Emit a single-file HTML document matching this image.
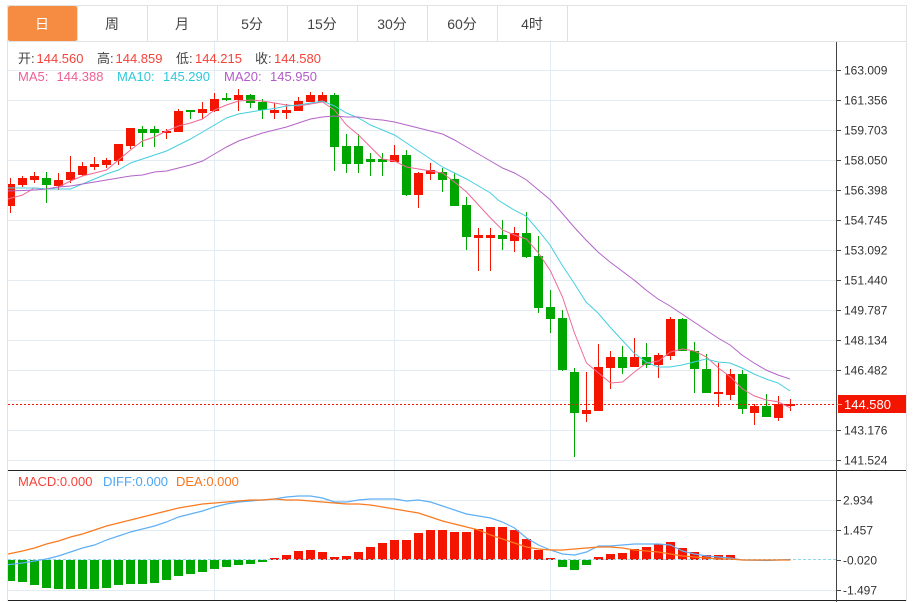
<!DOCTYPE html>
<html lang="zh"><head><meta charset="utf-8"><title>K线图</title>
<style>
html,body{margin:0;padding:0;background:#fff;width:913px;height:602px;overflow:hidden}
svg{display:block;position:absolute;left:0;top:0}
text{font-family:"Liberation Sans","Noto Sans CJK SC",sans-serif}
</style></head><body>
<svg width="913" height="602" viewBox="0 0 913 602" xmlns="http://www.w3.org/2000/svg">
<rect width="913" height="602" fill="#fff"/>
<!-- frame and tabs -->
<path d="M7 5.5H906.5V601M7.5 5V601M7 41.5H906.5" fill="none" stroke="#e2e2e2"/>
<path d="M77.5 6V41M147.5 6V41M217.5 6V41M287.5 6V41M357.5 6V41M427.5 6V41M497.5 6V41M567.5 6V41" stroke="#e0e0e0"/>
<rect x="8" y="6" width="69" height="35" rx="2" fill="#f68c42"/>
<g font-size="14" text-anchor="middle" fill="#444">
<text x="42" y="29" fill="#fff">日</text><text x="112" y="29">周</text><text x="182" y="29">月</text><text x="252" y="29">5分</text><text x="322" y="29">15分</text><text x="392" y="29">30分</text><text x="462" y="29">60分</text><text x="532" y="29">4时</text>
</g>
<!-- grid -->
<path d="M8 70.5H836M8 100.5H836M8 130.5H836M8 160.5H836M8 190.5H836M8 220.5H836M8 250.5H836M8 280.5H836M8 310.5H836M8 340.5H836M8 370.5H836M8 400.5H836M8 430.5H836M8 460.5H836M8 500.5H836M8 530.5H836M8 590.5H836M214.5 42V600M394.5 42V600M550.5 42V600" stroke="#e3ecf2" fill="none"/>
<path d="M8 470.5H906M8 600.5H906" stroke="#222"/>
<path d="M836.5 42V602" stroke="#444"/>
<path d="M836 70.5h5M836 100.5h5M836 130.5h5M836 160.5h5M836 190.5h5M836 220.5h5M836 250.5h5M836 280.5h5M836 310.5h5M836 340.5h5M836 370.5h5M836 430.5h5M836 460.5h5M836 500.5h5M836 530.5h5M836 560.5h5M836 590.5h5" stroke="#444"/>
<g font-size="12" fill="#333">
<text x="844" y="74.5">163.009</text><text x="844" y="104.5">161.356</text><text x="844" y="134.5">159.703</text><text x="844" y="164.5">158.050</text><text x="844" y="194.5">156.398</text><text x="844" y="224.5">154.745</text><text x="844" y="254.5">153.092</text><text x="844" y="284.5">151.440</text><text x="844" y="314.5">149.787</text><text x="844" y="344.5">148.134</text><text x="844" y="374.5">146.482</text><text x="844" y="434.5">143.176</text><text x="844" y="464.5">141.524</text>
<text x="843" y="504.5">2.934</text><text x="843" y="534.5">1.457</text><text x="843" y="564.5">-0.020</text><text x="843" y="594.5">-1.497</text>
</g>
<!-- wicks -->
<path stroke="#f41500" fill="none" d="M10.5 178V213M22.5 176V187M34.5 172V183M58.5 173V190M70.5 156V183M82.5 162V176M94.5 157V170M106.5 158V168M118.5 144V165M130.5 128V149M166.5 129V139M178.5 109V132M202.5 102V119M214.5 93V112M238.5 89V111M274.5 103V119M286.5 104V119M298.5 97V111M310.5 92V102M322.5 92V102M394.5 145V162M418.5 172V208M430.5 163V180M478.5 228V271M490.5 228V271M514.5 227V252M586.5 372V422M598.5 344V411M610.5 351V389M634.5 338V367M658.5 353V378M670.5 317V360M718.5 363V407M730.5 369V400M754.5 404V425M778.5 396V421M790.5 399V411"/>
<path stroke="#00a600" fill="none" d="M46.5 172V203M142.5 126V147M154.5 126V147M190.5 110V119M226.5 93V101M250.5 94V108M262.5 99V119M334.5 93V171M346.5 134V173M358.5 134V173M370.5 153V176M382.5 153V176M406.5 150V196M442.5 168V192M454.5 173V206M466.5 197V250M502.5 220V250M526.5 212V258M538.5 236V313M550.5 290V333M562.5 310V371M574.5 368V457M622.5 346V374M646.5 343V368M682.5 318V351M694.5 342V393M706.5 354V393M742.5 370V414M766.5 394V417"/>
<!-- candle bodies -->
<path fill="#f41500" d="M8 184h7v22h-7zM18 178h9v7h-9zM30 176h9v4h-9zM54 180h9v6h-9zM66 172h9v8h-9zM78 166h9v9h-9zM90 164h9v3h-9zM102 160h9v5h-9zM114 144h9v17h-9zM126 128h9v18h-9zM162 131h9v2h-9zM174 111h9v21h-9zM198 109h9v4h-9zM210 99h9v12h-9zM234 95h9v5h-9zM270 110h9v3h-9zM282 110h9v3h-9zM294 101h9v10h-9zM306 95h9v7h-9zM318 95h9v7h-9zM390 155h9v7h-9zM414 173h9v22h-9zM426 170h9v4h-9zM474 235h9v3h-9zM486 235h9v3h-9zM510 233h9v8h-9zM582 410h9v4h-9zM594 367h9v44h-9zM606 357h9v11h-9zM630 357h9v10h-9zM654 355h9v10h-9zM666 319h9v37h-9zM714 392h9v2h-9zM726 374h9v21h-9zM750 406h9v7h-9zM774 404h9v14h-9zM786 404h9v2h-9z"/>
<path fill="#00a600" d="M42 178h9v7h-9zM138 129h9v4h-9zM150 129h9v4h-9zM186 110h9v2h-9zM222 98h9v2h-9zM246 95h9v8h-9zM258 102h9v8h-9zM330 95h9v52h-9zM342 146h9v18h-9zM354 146h9v18h-9zM366 159h9v3h-9zM378 159h9v3h-9zM402 155h9v40h-9zM438 172h9v8h-9zM450 179h9v27h-9zM462 205h9v32h-9zM498 235h9v4h-9zM522 233h9v24h-9zM534 256h9v52h-9zM546 307h9v12h-9zM558 318h9v52h-9zM570 372h9v41h-9zM618 357h9v11h-9zM642 357h9v8h-9zM678 319h9v32h-9zM690 351h9v18h-9zM702 369h9v24h-9zM738 374h9v35h-9zM762 406h9v11h-9z"/>
<!-- MA lines -->
<polyline fill="none" stroke="#ef6a96" stroke-width="1" points="8,199 22.5,195 34.5,188 46.5,189 58.5,187 70.5,181 82.5,176 94.5,173 106.5,170 118.5,160 130.5,150 142.5,141 154.5,137 166.5,131 178.5,126 190.5,123 202.5,119 214.5,110 226.5,105 238.5,101 250.5,100 262.5,101 274.5,103 286.5,105 298.5,106 310.5,104 322.5,102 334.5,110 346.5,125 358.5,135 370.5,147 382.5,159 394.5,161 406.5,167 418.5,169 430.5,171 442.5,173 454.5,182 466.5,192 478.5,205 490.5,218 502.5,230 514.5,235 526.5,239 538.5,253 550.5,271 562.5,297 574.5,333 586.5,363 598.5,373 610.5,383 622.5,382 634.5,372 646.5,363 658.5,361 670.5,352 682.5,349 694.5,351 706.5,357 718.5,368 730.5,377 742.5,389 754.5,396 766.5,400 778.5,402 790.5,408"/>
<polyline fill="none" stroke="#45cfe0" stroke-width="1" points="8,188 22.5,188 34.5,188 46.5,189 58.5,189 70.5,189 82.5,184 94.5,179 106.5,174 118.5,170 130.5,163 142.5,159 154.5,155 166.5,151 178.5,145 190.5,139 202.5,132 214.5,125 226.5,118 238.5,114 250.5,112 262.5,110 274.5,108.5 286.5,106 298.5,105 310.5,103 322.5,101 334.5,106 346.5,113 358.5,118 370.5,125 382.5,130 394.5,135 406.5,143 418.5,151 430.5,159 442.5,167 454.5,173 466.5,179 478.5,186 490.5,193 498,200 514,210 526,216 538,230 550,245 562,265 574,283 586,302 598,313 610,327 622,340 634,353 646,362 658,367 670,367 682,365 694,362 706,359 718,362 730,363 742,368 754,374 766,379 778,383 790,391"/>
<polyline fill="none" stroke="#b464c8" stroke-width="1" points="8,191 22.5,190.5 34.5,190 46.5,189 58.5,187 70.5,186 82.5,184 94.5,182 106.5,180 118.5,178 130.5,176 142.5,175 154.5,172 166.5,171 178.5,168 190.5,165 202.5,161 214.5,154 226.5,147 238.5,141 250.5,137 262.5,133 274.5,130 286.5,127 298.5,123 310.5,119 322.5,117 334.5,116 346.5,117 358.5,117 370.5,119 382.5,120 394.5,122 406.5,125 418.5,128 430.5,131 442.5,134 454.5,140 466.5,147 478.5,154 490.5,161 502.5,168 514.5,173 526.5,180 538.5,190 550.5,200 562,213 574,227 586,240 598,252 610,262 622,271 634,280 646,290 658,299 670,306 682,314 694,322 706,330 718,338 730,345 742,355 754,363 766,370 778,375 790,379"/>
<!-- price line -->
<path d="M8 404.5H836" stroke="#f41500" stroke-dasharray="2 2"/>
<rect x="838" y="395" width="68" height="18" fill="#f41500"/>
<path d="M837 404.5h5" stroke="#f9a090"/>
<text x="844" y="409" font-size="13" fill="#fff">144.580</text>
<!-- legends -->
<g font-size="13">
<g fill="#444"><text x="18" y="63">开:</text><text x="97" y="63">高:</text><text x="176" y="63">低:</text><text x="255" y="63">收:</text></g>
<g fill="#f4433a"><text x="36.5" y="63">144.560</text><text x="115.5" y="63">144.859</text><text x="195" y="63">144.215</text><text x="274" y="63">144.580</text></g>
<g fill="#ef5f94"><text x="18" y="81">MA5:</text><text x="56.5" y="81">144.388</text></g>
<g fill="#2fc8dc"><text x="117" y="81">MA10:</text><text x="163" y="81">145.290</text></g>
<g fill="#b25cc8"><text x="224" y="81">MA20:</text><text x="270" y="81">145.950</text></g>
<text x="18" y="486" fill="#f4433a">MACD:0.000</text>
<text x="103" y="486" fill="#4ba6f5">DIFF:0.000</text>
<text x="176" y="486" fill="#f9751c">DEA:0.000</text>
</g>
<!-- MACD bars -->
<path fill="#f41500" d="M270 558h9v2h-9zM282 555h9v5h-9zM294 551h9v9h-9zM306 550h9v10h-9zM318 552h9v8h-9zM330 557h9v3h-9zM342 556h9v4h-9zM354 552h9v8h-9zM366 547h9v13h-9zM378 543h9v17h-9zM390 540h9v20h-9zM402 540h9v20h-9zM414 533h9v27h-9zM426 530h9v30h-9zM438 530h9v30h-9zM450 532h9v28h-9zM462 532h9v28h-9zM474 529h9v31h-9zM486 527h9v33h-9zM498 527h9v33h-9zM510 530h9v30h-9zM522 539h9v21h-9zM534 550h9v10h-9zM546 558h9v2h-9zM594 557h9v3h-9zM606 554h9v6h-9zM618 553h9v7h-9zM630 549h9v11h-9zM642 547h9v13h-9zM654 544h9v16h-9zM666 542h9v18h-9zM678 548h9v12h-9zM690 552h9v8h-9zM702 555h9v5h-9zM714 555h9v5h-9zM726 555h9v5h-9z"/>
<path fill="#00a600" d="M8 560h7v21h-7zM18 560h9v22h-9zM30 560h9v25h-9zM42 560h9v28h-9zM54 560h9v29h-9zM66 560h9v29h-9zM78 560h9v29h-9zM90 560h9v29h-9zM102 560h9v28h-9zM114 560h9v25h-9zM126 560h9v24h-9zM138 560h9v24h-9zM150 560h9v23h-9zM162 560h9v20h-9zM174 560h9v16h-9zM186 560h9v14h-9zM198 560h9v12h-9zM210 560h9v9h-9zM222 560h9v7h-9zM234 560h9v5h-9zM246 560h9v4h-9zM258 560h9v2h-9zM558 560h9v7h-9zM570 560h9v10h-9zM582 560h9v5h-9z"/>
<path fill="#9adba0" d="M762 560h9v1h-9z"/>
<path d="M8 559.5H836" stroke="#8fd8ee" stroke-dasharray="3 2"/>
<polyline fill="none" stroke="#5fb0f5" stroke-width="1.2" points="8,564.7 22.5,563 34.5,561 46.5,559 58.5,556 70.5,552 82.5,548 94.5,545 106.5,540 118.5,536 130.5,532 142.5,529 154.5,526 166.5,522 178.5,517 190.5,514 202.5,511 214.5,507 226.5,504 238.5,502 250.5,501 262.5,500 274.5,499 286.5,497 298.5,496 310.5,496 322.5,498 334.5,502 346.5,502 358.5,500 370.5,499 382.5,499 394.5,499 406.5,501 418.5,500 430.5,502 442.5,506 454.5,510 466.5,514 478.5,516 490.5,518 502.5,522 514.5,528 526.5,538 538.5,545 550.5,550 562.5,554 574.5,555 586.5,552 598.5,546 610.5,546 622.5,545 634.5,544 646.5,544 658.5,544 670.5,545 682.5,551 694.5,554 706.5,556 718.5,557 730.5,558 742.5,560 766.5,560.5 790.5,559.5"/>
<polyline fill="none" stroke="#f97a1f" stroke-width="1.2" points="8,554 22.5,551 34.5,548 46.5,544 58.5,541 70.5,537 82.5,534 94.5,530 106.5,526 118.5,523 130.5,520 142.5,517 154.5,514 166.5,511 178.5,508 190.5,506 202.5,504 214.5,503 226.5,502 238.5,501 250.5,500 262.5,500 274.5,499 286.5,500 298.5,500 310.5,501 322.5,502 334.5,503 346.5,504 358.5,504 370.5,505 382.5,507 394.5,509 406.5,511 418.5,513 430.5,517 442.5,521 454.5,524 466.5,527 478.5,530 490.5,535 502.5,539 514.5,543 526.5,547 538.5,549 550.5,550 562.5,550 574.5,549 586.5,548 598.5,547 610.5,547 622.5,548 634.5,550 646.5,551 658.5,552 670.5,554 682.5,556 694.5,557 706.5,558 718.5,559 730.5,559 742.5,560 790.5,560"/>
</svg>
</body></html>
